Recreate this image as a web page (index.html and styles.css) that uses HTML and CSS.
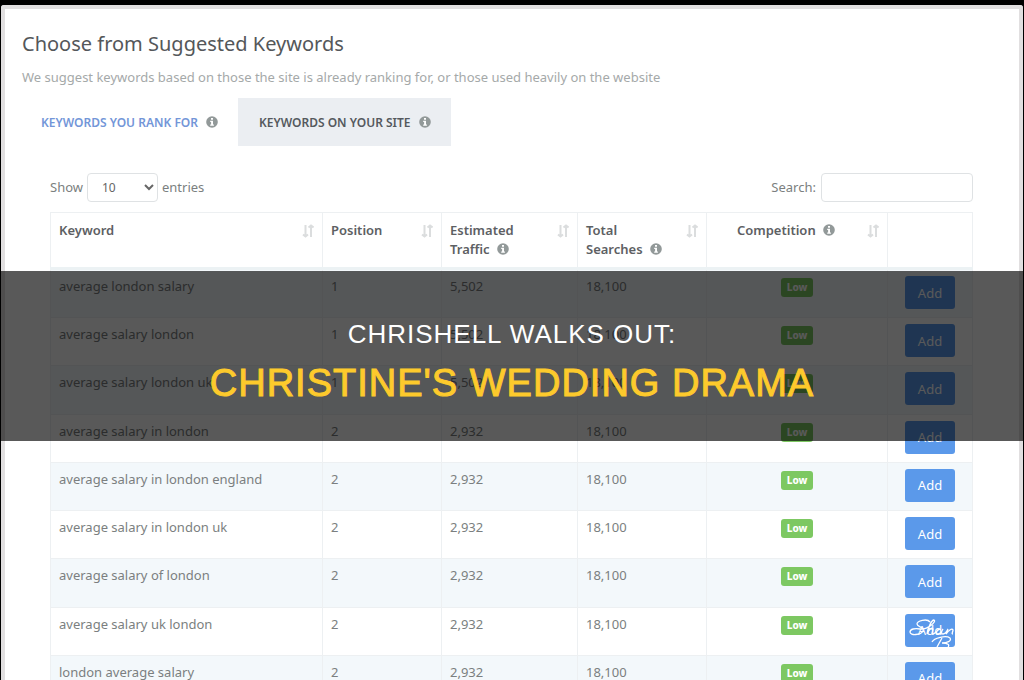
FILE: index.html
```html
<!DOCTYPE html>
<html lang="en">
<head>
<meta charset="utf-8">
<title>Suggested Keywords</title>
<link rel="stylesheet" href="styles.css">
</head>
<body>
<svg class="defs" aria-hidden="true">
  <symbol id="info" viewBox="0 0 12 12"><circle cx="6" cy="6" r="5.8" fill="#929999"/><path d="M5 2h2v1.7H5zM4.2 4.8H7v3.6h.9v1.3H4.2V8.400h.9V6.100h-.9z" fill="#fff"/></symbol>
  <symbol id="sort" viewBox="0 0 12 14"><path d="M3.500 1v11M1 10.500l2.500 2L6 10.500M9 13V2M6.500 3.500L9 1.500 11.500 3.500" fill="none" stroke="#dbddde" stroke-width="2"/></symbol>
</svg>
<main class="sheet">
  <h1 class="title">Choose from Suggested Keywords</h1>
  <p class="intro">We suggest keywords based on those the site is already ranking for, or those used heavily on the website</p>
  <nav class="tabs">
    <a class="tab" href="#rank">KEYWORDS YOU RANK FOR <svg class="info"><use href="#info"/></svg></a>
    <a class="tab tab-active" href="#site">KEYWORDS ON YOUR SITE <svg class="info"><use href="#info"/></svg></a>
  </nav>
  <section class="panel">
    <div class="controls">
      <label class="field">Show <select class="length"><option>10</option><option>25</option></select> entries</label>
      <label class="field">Search: <input class="search" type="search"></label>
    </div>
    <table class="grid">
      <colgroup><col><col class="c-pos"><col class="c-traffic"><col class="c-total"><col class="c-comp"><col class="c-add"></colgroup>
      <thead>
        <tr>
          <th><div class="head">Keyword<svg class="sort"><use href="#sort"/></svg></div></th>
          <th><div class="head">Position<svg class="sort"><use href="#sort"/></svg></div></th>
          <th><div class="head"><span>Estimated<br>Traffic <svg class="info"><use href="#info"/></svg></span><svg class="sort"><use href="#sort"/></svg></div></th>
          <th><div class="head"><span>Total<br>Searches <svg class="info"><use href="#info"/></svg></span><svg class="sort"><use href="#sort"/></svg></div></th>
          <th><div class="head"><span class="middle">Competition <svg class="info"><use href="#info"/></svg></span><svg class="sort"><use href="#sort"/></svg></div></th>
          <th></th>
        </tr>
      </thead>
      <tbody>
        <tr><td>average london salary</td><td>1</td><td>5,502</td><td>18,100</td><td class="center"><span class="badge">Low</span></td><td class="action"><button class="add">Add</button></td></tr>
        <tr><td>average salary london</td><td>1</td><td>5,502</td><td>18,100</td><td class="center"><span class="badge">Low</span></td><td class="action"><button class="add">Add</button></td></tr>
        <tr><td>average salary london uk</td><td>1</td><td>5,502</td><td>18,100</td><td class="center"><span class="badge">Low</span></td><td class="action"><button class="add">Add</button></td></tr>
        <tr><td>average salary in london</td><td>2</td><td>2,932</td><td>18,100</td><td class="center"><span class="badge">Low</span></td><td class="action"><button class="add">Add</button></td></tr>
        <tr><td>average salary in london england</td><td>2</td><td>2,932</td><td>18,100</td><td class="center"><span class="badge">Low</span></td><td class="action"><button class="add">Add</button></td></tr>
        <tr><td>average salary in london uk</td><td>2</td><td>2,932</td><td>18,100</td><td class="center"><span class="badge">Low</span></td><td class="action"><button class="add">Add</button></td></tr>
        <tr><td>average salary of london</td><td>2</td><td>2,932</td><td>18,100</td><td class="center"><span class="badge">Low</span></td><td class="action"><button class="add">Add</button></td></tr>
        <tr><td>average salary uk london</td><td>2</td><td>2,932</td><td>18,100</td><td class="center"><span class="badge">Low</span></td><td class="action"><button class="add">Add<svg class="signature" viewBox="0 0 50 33" aria-hidden="true"><path d="M25 8C22 4 12 7 12 10c0 3 8 3 6 7-2 4-13 5-13 1 0-3 5-4 10-3 8 1 17-8 14-9-3 0-6 9-7 14 2-5 5-7 6-5 0 2-2 5 0 5s5-5 7-5c-3 0-5 5-2 5 2 0 4-3 5-5-2 3-2 5 0 5s4-3 5-5l-2 5c3-4 6-6 7-4 0 2-2 4 0 4M37 24l-5 9M27 28c2-4 14-7 18-4 2 3-3 5-8 5 6 0 8 2 6 4"/></svg></button></td></tr>
        <tr><td>london average salary</td><td>2</td><td>2,932</td><td>18,100</td><td class="center"><span class="badge">Low</span></td><td class="action"><button class="add">Add</button></td></tr>
      </tbody>
    </table>
  </section>
</main>
<div class="banner">
  <p class="banner-top">CHRISHELL WALKS OUT:</p>
  <p class="banner-main">CHRISTINE'S WEDDING DRAMA</p>
</div>
</body>
</html>
```
FILE: styles.css
```css
* { box-sizing: border-box; }
body {
  margin: 0;
  height: 100vh;
  overflow: hidden;
  position: relative;
  padding: 5px 1px 0;
  background: #000;
  color: #7b7f80;
  font: 13px/19px "Noto Sans", sans-serif;
}
.defs { display: none; }
.sheet {
  background: #fff;
  border: 4px solid #e1dfe0;
  border-bottom: 0;
  border-radius: 3px 3px 0 0;
  padding: 20px 17px 0;
}
.title {
  margin: 0;
  color: #54575a;
  font-size: 20px;
  font-weight: 400;
  line-height: 30px;
}
.intro { margin: 8px 0 11px; color: #a5a9a9; line-height: 20px; }
.tabs { display: flex; }
.tab {
  display: flex;
  align-items: center;
  gap: 8px;
  height: 48px;
  padding: 0 20px 0 19px;
  color: #7396d8;
  font-size: 12px;
  font-weight: 600;
  text-decoration: none;
}
.tab-active { background: #ebeef2; color: #55595e; padding-left: 21px; }
.info { width: 12px; height: 12px; }
th .info { margin-left: 4px; vertical-align: -1px; }
.panel { padding: 27px 29px 0 28px; }
.controls { display: flex; justify-content: space-between; margin-bottom: 10px; }
.field { display: flex; align-items: center; gap: 4px; }
.length, .search {
  height: 29px;
  background: #fff;
  border: 1px solid #dfe2e4;
  border-radius: 4px;
  color: #666;
  font: 12px "Noto Sans", sans-serif;
}
.length { width: 71px; padding: 0 0 0 10px; }
.search { width: 152px; margin-left: 1px; }
.grid {
  width: 100%;
  height: 492px;
  table-layout: fixed;
  border-collapse: collapse;
}
.grid th, .grid td {
  border: 1px solid #edf0f2;
  padding: 8px;
  text-align: left;
  vertical-align: top;
}
.grid th { height: 56px; color: #5d6063; font-weight: 600; border-bottom: 3px solid #ecf2f4; }
.grid td { padding-top: 7px; padding-bottom: 5px; }
.grid .action { padding-top: 6px; padding-bottom: 8px; }
.grid tbody tr:nth-child(odd) { background: #f3f8fb; }
.grid .center { text-align: center; }
.c-pos { width: 119px; }
.c-traffic { width: 136px; }
.c-total { width: 129px; }
.c-comp { width: 181px; }
.c-add { width: 85px; }
.head { display: flex; justify-content: space-between; align-items: flex-start; }
.middle { flex: 1; text-align: center; padding-right: 10px; }
.sort { width: 12px; height: 14px; flex: none; margin-top: 3px; }
.badge {
  display: inline-block;
  padding: 0 6px;
  border-radius: 3px;
  background: #7dc862;
  color: #fff;
  font-size: 10px;
  font-weight: 800;
}
.add {
  position: relative;
  display: block;
  margin: 0 auto;
  width: 50px;
  height: 33px;
  padding: 0;
  border: 0;
  border-radius: 3px;
  background: #5b99ea;
  color: #fff;
  font: 13px "Noto Sans", sans-serif;
}
.signature {
  position: absolute;
  inset: 0;
  width: 100%;
  height: 100%;
  fill: none;
  stroke: #fff;
  stroke-width: 1.3;
}
.banner {
  position: absolute;
  left: 0;
  right: 0;
  top: 271px;
  height: 170px;
  display: flex;
  flex-direction: column;
  align-items: center;
  justify-content: center;
  gap: 7px;
  padding-top: 7px;
  background: rgba(0, 0, 0, 0.65);
  font-family: "Liberation Sans", sans-serif;
  white-space: nowrap;
}
.banner p { margin: 0; }
.banner-top { color: #fff; font-size: 26px; line-height: 40px; letter-spacing: 1px; }
.banner-main { color: #fdca2c; font-size: 38px; line-height: 44px; letter-spacing: 1px; -webkit-text-stroke: 1px #fdca2c; }
```
